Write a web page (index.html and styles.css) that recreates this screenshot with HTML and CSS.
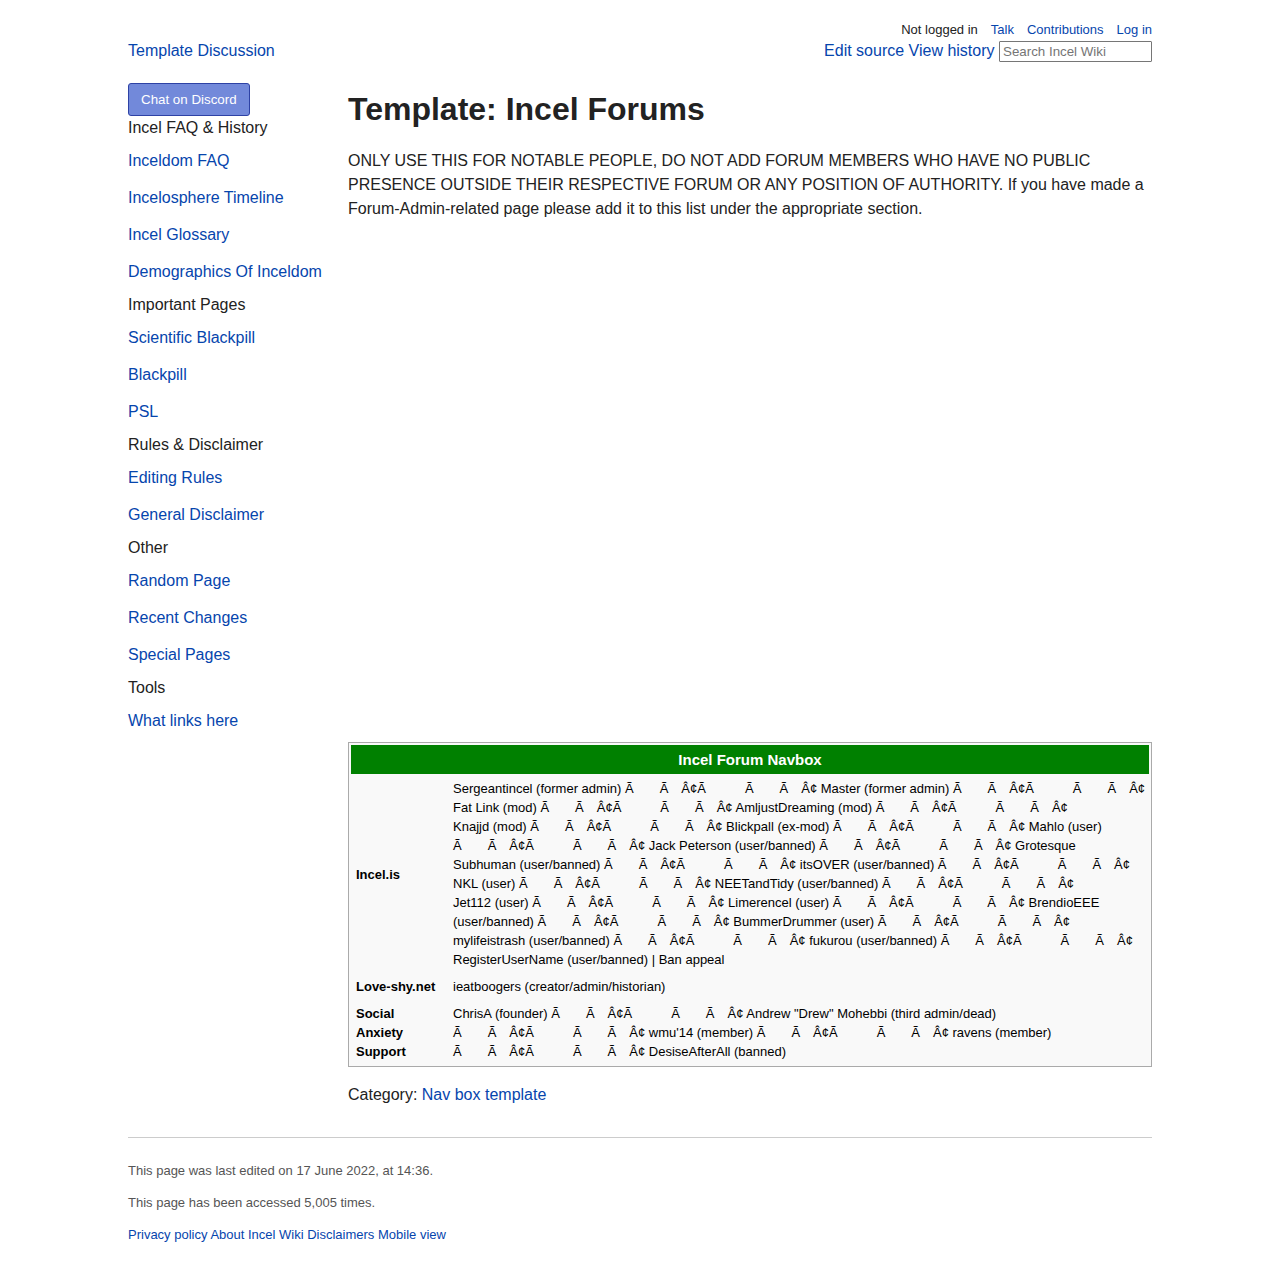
FILE: index.html
```html
<!DOCTYPE html>
<html lang="en">
<head>
<meta charset="utf-8">
<meta name="viewport" content="width=device-width, initial-scale=1">
<title>Template: Incel Forums</title>
<link rel="stylesheet" href="styles.css">
</head>
<body>
<div class="page">
  <header>
    <nav class="personal" aria-label="Personal tools">
      <span>Not logged in</span>
      <a href="#">Talk</a>
      <a href="#">Contributions</a>
      <a href="#">Log in</a>
    </nav>
    <div class="toolbar">
      <nav aria-label="Namespaces"><a href="#">Template</a> <a href="#">Discussion</a></nav>
      <form class="actions">
        <a href="#">Edit source</a> <a href="#">View history</a>
        <input class="search" type="search" placeholder="Search Incel Wiki" aria-label="Search Incel Wiki">
      </form>
    </div>
  </header>

  <div class="layout">
    <aside class="sidebar">
      <button class="discord" type="button">Chat on Discord</button>
      <h2>Incel FAQ &amp; History</h2>
      <ul>
        <li><a href="#">Inceldom FAQ</a></li>
        <li><a href="#">Incelosphere Timeline</a></li>
        <li><a href="#">Incel Glossary</a></li>
        <li><a href="#">Demographics Of Inceldom</a></li>
      </ul>
      <h2>Important Pages</h2>
      <ul>
        <li><a href="#">Scientific Blackpill</a></li>
        <li><a href="#">Blackpill</a></li>
        <li><a href="#">PSL</a></li>
      </ul>
      <h2>Rules &amp; Disclaimer</h2>
      <ul>
        <li><a href="#">Editing Rules</a></li>
        <li><a href="#">General Disclaimer</a></li>
      </ul>
      <h2>Other</h2>
      <ul>
        <li><a href="#">Random Page</a></li>
        <li><a href="#">Recent Changes</a></li>
        <li><a href="#">Special Pages</a></li>
      </ul>
      <h2>Tools</h2>
      <ul>
        <li><a href="#">What links here</a></li>
      </ul>
    </aside>

    <main class="intro">
      <h1>Template: Incel Forums</h1>
      <p>ONLY USE THIS FOR NOTABLE PEOPLE, DO NOT ADD FORUM MEMBERS WHO HAVE NO PUBLIC PRESENCE OUTSIDE THEIR RESPECTIVE FORUM OR ANY POSITION OF AUTHORITY. If you have made a Forum-Admin-related page please add it to this list under the appropriate section.</p>
    </main>

    <section class="related">
      <table class="navbox">
        <thead>
          <tr><th class="navbox-title" colspan="2" scope="colgroup">Incel Forum Navbox</th></tr>
        </thead>
        <tbody>
          <tr>
            <th class="group" scope="row">Incel.is</th>
            <td>Sergeantincel (former admin) <span class="sep">Ã&emsp;&emsp;Ã&emsp;Â¢Ã&emsp;&emsp;&emsp;Ã&emsp;&emsp;Ã&emsp;Â¢</span> Master (former admin) <span class="sep">Ã&emsp;&emsp;Ã&emsp;Â¢Ã&emsp;&emsp;&emsp;Ã&emsp;&emsp;Ã&emsp;Â¢</span><br>
            Fat Link (mod) <span class="sep">Ã&emsp;&emsp;Ã&emsp;Â¢Ã&emsp;&emsp;&emsp;Ã&emsp;&emsp;Ã&emsp;Â¢</span> AmljustDreaming (mod) <span class="sep">Ã&emsp;&emsp;Ã&emsp;Â¢Ã&emsp;&emsp;&emsp;Ã&emsp;&emsp;Ã&emsp;Â¢</span><br>
            Knajjd (mod) <span class="sep">Ã&emsp;&emsp;Ã&emsp;Â¢Ã&emsp;&emsp;&emsp;Ã&emsp;&emsp;Ã&emsp;Â¢</span> Blickpall (ex-mod) <span class="sep">Ã&emsp;&emsp;Ã&emsp;Â¢Ã&emsp;&emsp;&emsp;Ã&emsp;&emsp;Ã&emsp;Â¢</span> Mahlo (user)<br>
            <span class="sep">Ã&emsp;&emsp;Ã&emsp;Â¢Ã&emsp;&emsp;&emsp;Ã&emsp;&emsp;Ã&emsp;Â¢</span> Jack Peterson (user/banned) <span class="sep">Ã&emsp;&emsp;Ã&emsp;Â¢Ã&emsp;&emsp;&emsp;Ã&emsp;&emsp;Ã&emsp;Â¢</span> Grotesque<br>
            Subhuman (user/banned) <span class="sep">Ã&emsp;&emsp;Ã&emsp;Â¢Ã&emsp;&emsp;&emsp;Ã&emsp;&emsp;Ã&emsp;Â¢</span> itsOVER (user/banned) <span class="sep">Ã&emsp;&emsp;Ã&emsp;Â¢Ã&emsp;&emsp;&emsp;Ã&emsp;&emsp;Ã&emsp;Â¢</span><br>
            NKL (user) <span class="sep">Ã&emsp;&emsp;Ã&emsp;Â¢Ã&emsp;&emsp;&emsp;Ã&emsp;&emsp;Ã&emsp;Â¢</span> NEETandTidy (user/banned) <span class="sep">Ã&emsp;&emsp;Ã&emsp;Â¢Ã&emsp;&emsp;&emsp;Ã&emsp;&emsp;Ã&emsp;Â¢</span><br>
            Jet112 (user) <span class="sep">Ã&emsp;&emsp;Ã&emsp;Â¢Ã&emsp;&emsp;&emsp;Ã&emsp;&emsp;Ã&emsp;Â¢</span> Limerencel (user) <span class="sep">Ã&emsp;&emsp;Ã&emsp;Â¢Ã&emsp;&emsp;&emsp;Ã&emsp;&emsp;Ã&emsp;Â¢</span> BrendioEEE<br>
            (user/banned) <span class="sep">Ã&emsp;&emsp;Ã&emsp;Â¢Ã&emsp;&emsp;&emsp;Ã&emsp;&emsp;Ã&emsp;Â¢</span> BummerDrummer (user) <span class="sep">Ã&emsp;&emsp;Ã&emsp;Â¢Ã&emsp;&emsp;&emsp;Ã&emsp;&emsp;Ã&emsp;Â¢</span><br>
            mylifeistrash (user/banned) <span class="sep">Ã&emsp;&emsp;Ã&emsp;Â¢Ã&emsp;&emsp;&emsp;Ã&emsp;&emsp;Ã&emsp;Â¢</span> fukurou (user/banned) <span class="sep">Ã&emsp;&emsp;Ã&emsp;Â¢Ã&emsp;&emsp;&emsp;Ã&emsp;&emsp;Ã&emsp;Â¢</span><br>
            RegisterUserName (user/banned) | Ban appeal</td>
          </tr>
          <tr>
            <th class="group" scope="row">Love-shy.net</th>
            <td>ieatboogers (creator/admin/historian)</td>
          </tr>
          <tr>
            <th class="group" scope="row">Social Anxiety Support</th>
            <td>ChrisA (founder) <span class="sep">Ã&emsp;&emsp;Ã&emsp;Â¢Ã&emsp;&emsp;&emsp;Ã&emsp;&emsp;Ã&emsp;Â¢</span> Andrew "Drew" Mohebbi (third admin/dead)<br>
            <span class="sep">Ã&emsp;&emsp;Ã&emsp;Â¢Ã&emsp;&emsp;&emsp;Ã&emsp;&emsp;Ã&emsp;Â¢</span> wmu'14 (member) <span class="sep">Ã&emsp;&emsp;Ã&emsp;Â¢Ã&emsp;&emsp;&emsp;Ã&emsp;&emsp;Ã&emsp;Â¢</span> ravens (member)<br>
            <span class="sep">Ã&emsp;&emsp;Ã&emsp;Â¢Ã&emsp;&emsp;&emsp;Ã&emsp;&emsp;Ã&emsp;Â¢</span> DesiseAfterAll (banned)</td>
          </tr>
        </tbody>
      </table>
      <p class="category">Category: <a href="#">Nav box template</a></p>
    </section>
  </div>

  <footer>
    <p>This page was last edited on 17 June 2022, at 14:36.</p>
    <p>This page has been accessed 5,005 times.</p>
    <p><a href="#">Privacy policy</a> <a href="#">About Incel Wiki</a> <a href="#">Disclaimers</a> <a href="#">Mobile view</a></p>
  </footer>
</div>
</body>
</html>
```
FILE: styles.css
```css
* {
  box-sizing: border-box;
}

body {
  margin: 0;
  background: #fff;
  color: #222;
  font: 16px/24px "Liberation Sans", Arial, sans-serif;
}

h1,
h2,
p,
ul {
  margin: 0;
  padding: 0;
}

a {
  color: #0645ad;
  text-decoration: none;
}

a:hover {
  text-decoration: underline;
}

.page {
  padding: 20px 10% 29px;
}

.personal {
  display: flex;
  justify-content: flex-end;
  gap: 13px;
  font-size: 13px;
  line-height: 19px;
}

.toolbar {
  display: flex;
  justify-content: space-between;
}

.search {
  width: 153px;
  height: 21px;
  margin: 0;
  padding: 1px 3px;
  border: 1px solid #767676;
  border-radius: 1px;
  font-family: "Liberation Sans", Arial, sans-serif;
  appearance: none;
}

.search::placeholder {
  color: #757575;
}

.layout {
  display: grid;
  grid-template-columns: 220px minmax(0, 1fr);
  margin-top: 20px;
}

.discord {
  display: block;
  height: 33px;
  padding: 0 12px;
  border: 1px solid #2e42a5;
  border-radius: 3px;
  background: #7289da;
  color: #fff;
  font-family: "Liberation Sans", Arial, sans-serif;
}

.sidebar h2 {
  font-size: 16px;
  font-weight: normal;
}

.sidebar ul {
  display: grid;
  gap: 13px;
  padding: 9px 0;
  list-style: none;
}

.intro h1 {
  margin: 6px 0 20px;
  font-size: 32px;
  line-height: 40px;
}

.related {
  grid-column: 2;
}

.navbox {
  width: 100%;
  border: 1px solid #aaa;
  border-spacing: 2px;
  background: #f9f9f9;
  color: #000;
  font-size: 13px;
  line-height: 19px;
}

.navbox th,
.navbox td {
  padding: 3px 0 3px 5px;
  text-align: left;
}

.navbox .navbox-title {
  padding: 5px;
  background: #008000;
  color: #fff;
  font-size: 15px;
  text-align: center;
}

.navbox .group {
  width: 95px;
  padding-right: 8px;
}

.sep {
  white-space: nowrap;
}

.category {
  margin-top: 16px;
}

footer {
  margin-top: 30px;
  padding-top: 23px;
  border-top: 1px solid #ccc;
  color: #555;
  font-size: 13px;
  line-height: 19px;
}

footer p {
  margin-bottom: 13px;
}
```
